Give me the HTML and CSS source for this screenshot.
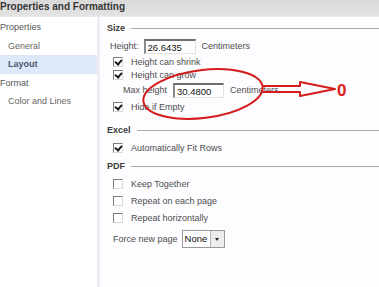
FILE: index.html
```html
<!DOCTYPE html>
<html lang="en">

<head>
  <meta charset="UTF-8">
  <title>Properties and Formatting</title>
  <link rel="stylesheet" href="styles.css">
</head>

<body>
  <div class="app">
    <div class="title-bar">Properties and Formatting</div>

    <div class="content">
      <div class="sidebar">
        <div class="nav-group">Properties</div>
        <div class="nav-item">General</div>
        <div class="nav-item selected">Layout</div>
        <div class="nav-group">Format</div>
        <div class="nav-item">Color and Lines</div>
      </div>

      <div class="panel">
        <div class="section-head">Size</div>
        <div class="section size-section">
          <div class="field-row indent-sm">
            <label>Height:</label>
            <span class="text-box box-height">26.6435</span>
            <span>Centimeters</span>
          </div>
          <div class="check-row first-check"><span class="cb checked"></span>Height can shrink</div>
          <div class="check-row"><span class="cb checked"></span>Height can grow</div>
          <div class="field-row indent-lg max-row">
            <label>Max height</label>
            <span class="text-box box-max">30.4800</span>
            <span>Centimeters</span>
          </div>
          <div class="check-row hide-row"><span class="cb checked"></span>Hide if Empty</div>
        </div>

        <div class="section-head excel-head">Excel</div>
        <div class="section excel-section">
          <div class="check-row"><span class="cb checked"></span>Automatically Fit Rows</div>
        </div>

        <div class="section-head pdf-head">PDF</div>
        <div class="section pdf-section">
          <div class="check-row tall"><span class="cb"></span>Keep Together</div>
          <div class="check-row tall"><span class="cb"></span>Repeat on each page</div>
          <div class="check-row tall"><span class="cb"></span>Repeat horizontally</div>
          <div class="field-row force-row">
            <label>Force new page</label>
            <span class="select-box">
              <span class="select-value">None</span>
              <span class="select-arrow"></span>
            </span>
          </div>
        </div>
      </div>
    </div>

    <!-- red marker drawn over the screenshot -->
    <svg class="markup" width="379" height="287" viewBox="0 0 379 287">
      <ellipse cx="203" cy="94" rx="60" ry="24" transform="rotate(-7 203 94)" fill="none" stroke="#d41c1c" stroke-width="2" />
      <path d="M263 86 L300 86 L300 82 L335 89 L300 96 L300 92 L263 92" fill="none" stroke="#d41c1c" stroke-width="2" stroke-linejoin="round" />
      <text x="337" y="96" class="mark-zero">0</text>
    </svg>
  </div>
</body>

</html>
```

FILE: styles.css
```css
body {
  margin: 0;
  font-family: "Liberation Sans", Arial, sans-serif;
  font-size: 9px;
  color: #4e4e4e;
  background: #fdfcff;
}

.app {
  position: relative;
  width: 379px;
  height: 287px;
  overflow: hidden;
}

.title-bar {
  height: 16px;
  line-height: 14px;
  font-size: 10px;
  font-weight: bold;
  color: #363636;
  background: linear-gradient(to bottom, #d9d9d9, #e3e3e3);
  border-bottom: 1px solid #eaeaea;
}

.content {
  display: flex;
  height: 270px;
}

.sidebar {
  width: 97px;
  padding-top: 1px;
  background: #fff;
  border-right: 3px solid #efedf3;
}

.nav-group,
.nav-item {
  height: 18.5px;
  line-height: 18.5px;
  color: #555;
}

.nav-item {
  padding-left: 8px;
  color: #666;
}

.nav-item.selected {
  font-weight: bold;
  color: #4a5a72;
  background: #dde8f8;
}

.panel {
  flex: 1;
  padding: 5px 0 0 7px;
}

.section-head {
  display: flex;
  align-items: center;
  gap: 6px;
  height: 12px;
  font-weight: bold;
  color: #3c3c3c;
}

.section-head::after {
  content: "";
  flex: 1;
  border-top: 1px solid #a9a9a9;
}

.section {
  display: flex;
  flex-direction: column;
}

.size-section {
  margin-top: 4px;
}

.excel-head {
  margin-top: 11px;
}

.excel-section {
  margin-top: 5px;
}

.pdf-head {
  margin-top: 6px;
}

.pdf-section {
  margin-top: 3px;
}

.check-row {
  display: flex;
  align-items: center;
  gap: 8px;
  height: 13px;
  padding-left: 6px;
}

.check-row.tall {
  height: 17px;
}

.first-check {
  margin-top: 1px;
}

.hide-row {
  margin-top: 2px;
}

.cb {
  position: relative;
  box-sizing: border-box;
  width: 10px;
  height: 10px;
  border: 1px solid #7c7c7c;
  border-right-color: #d8d8d8;
  border-bottom-color: #d8d8d8;
  background: #fff;
}

.cb.checked::after {
  content: "";
  position: absolute;
  left: 2px;
  top: 0;
  width: 3px;
  height: 5px;
  border-right: 2px solid #1e1e1e;
  border-bottom: 2px solid #1e1e1e;
  transform: rotate(40deg);
}

.field-row {
  display: flex;
  align-items: center;
  height: 16px;
}

.indent-sm {
  padding-left: 3px;
}

.indent-lg {
  padding-left: 16px;
}

.max-row {
  margin-top: 1px;
}

.field-row label {
  margin-right: 5px;
}

.max-row label {
  margin-right: 6px;
}

.text-box {
  box-sizing: border-box;
  height: 15px;
  line-height: 13px;
  padding-left: 2px;
  margin-right: 6px;
  font-size: 9.5px;
  color: #111;
  background: #fff;
  border: 1px solid #e2e2e2;
  border-top: 2px solid #6e6e6e;
  border-left: 2px solid #8a8a8a;
}

.box-height {
  width: 52px;
}

.box-max {
  width: 51px;
}

.force-row {
  margin-top: 4px;
  height: 18px;
  padding-left: 6px;
}

.force-row label {
  margin-right: 4px;
}

.select-box {
  display: flex;
  box-sizing: border-box;
  width: 43px;
  height: 18px;
  border: 1px solid #9a9a9a;
  background: #fff;
}

.select-value {
  flex: 1;
  line-height: 16px;
  padding-left: 2px;
  font-size: 9.5px;
  color: #111;
}

.select-arrow {
  position: relative;
  width: 13px;
  background: #ececec;
  border-left: 1px solid #b5b5b5;
}

.select-arrow::after {
  content: "";
  position: absolute;
  left: 4px;
  top: 7px;
  border-left: 2.5px solid transparent;
  border-right: 2.5px solid transparent;
  border-top: 3px solid #222;
}

.markup {
  position: absolute;
  left: 0;
  top: 0;
  pointer-events: none;
}

.mark-zero {
  font-family: "Liberation Sans", Arial, sans-serif;
  font-size: 17px;
  font-weight: bold;
  fill: #d8201c;
}
```
